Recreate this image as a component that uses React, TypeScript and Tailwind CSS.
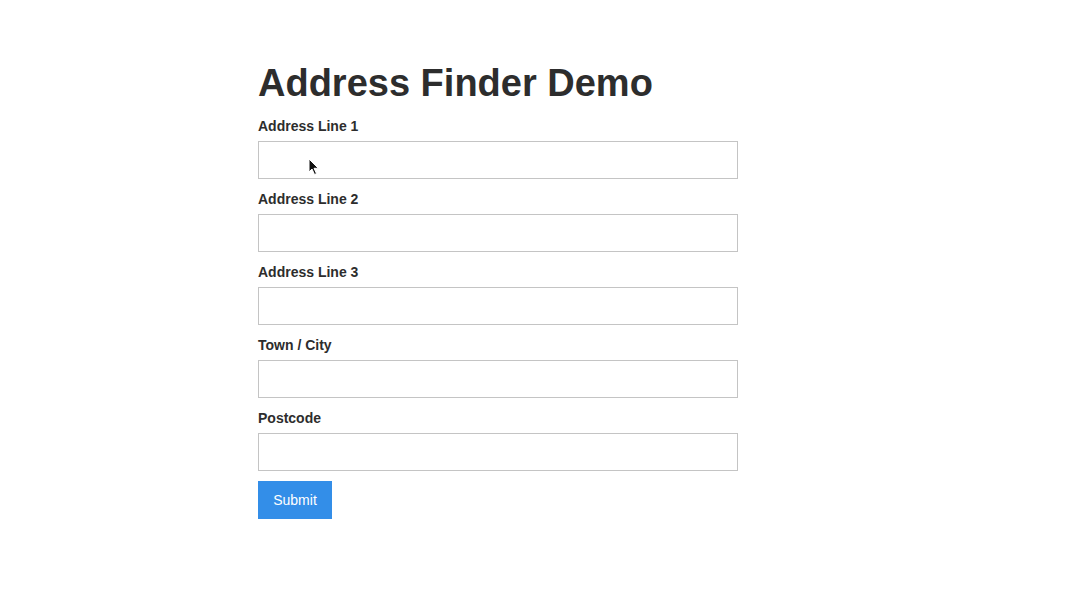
const fields = ["Address Line 1", "Address Line 2", "Address Line 3", "Town / City", "Postcode"];

export default function App() {
  return (
    <div className="min-h-[608px] bg-white font-['Liberation_Sans',Arial,sans-serif] text-[#2d2d2d]">
      <div className="relative ml-[258px] w-[480px] pt-[61px]">
        <h1 className="mb-[13px] text-[38px] font-bold leading-[44px]">Address Finder Demo</h1>
        <form>
          {fields.map((label) => (
            <div key={label} className="mb-[12px]">
              <label className="mb-[6px] block text-[14px] font-bold leading-[17px]">{label}</label>
              <input type="text" className="block h-[38px] w-full border border-[#c4c4c4] bg-white px-2 outline-none" />
            </div>
          ))}
          <button
            type="button"
            className="-mt-[2px] h-[38px] w-[74px] bg-[#338ee8] text-[14px] text-white"
          >
            Submit
          </button>
        </form>
        {/* mouse pointer captured in the screenshot */}
        <svg className="absolute left-[50px] top-[158px]" width="12" height="18" viewBox="0 0 12 18">
          <path d="M1 1 L1 14 L4 11 L6.5 16.5 L8.5 15.6 L6 10.3 L10.3 10.3 Z" fill="#111" stroke="#fff" strokeWidth="1" />
        </svg>
      </div>
    </div>
  );
}
